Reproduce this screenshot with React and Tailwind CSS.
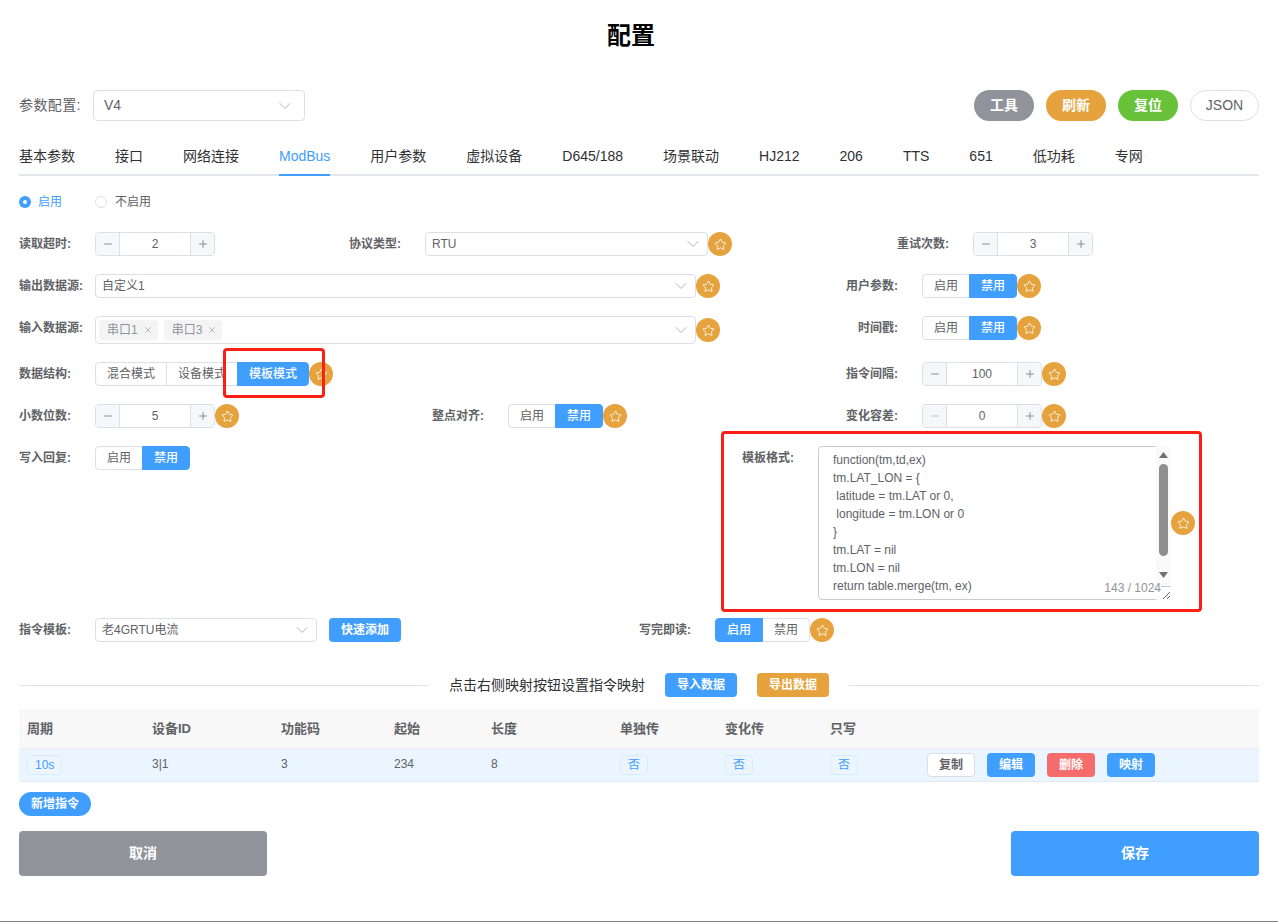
import React from "react";
import { ChevronDown, Minus, Plus, Star, X } from "lucide-react";

const Lab = ({ className = "", children }) => (
  <div className={"h-6 leading-6 text-xs font-bold text-[#606266] shrink-0 whitespace-nowrap " + className}>{children}</div>
);
const Fav = () => (
  <div className="w-6 h-6 rounded-full bg-[#e6a23c] flex items-center justify-center shrink-0">
    <Star size={13} strokeWidth={1.6} color="#fff" />
  </div>
);
const Num = ({ v, off }) => (
  <div className="w-[120px] h-6 border border-[#dcdfe6] rounded flex items-center text-xs text-[#606266] shrink-0 overflow-hidden">
    <div className="w-6 h-full bg-[#f5f7fa] border-r border-[#dcdfe6] flex items-center justify-center">
      <Minus size={12} color={off ? "#c0c4cc" : "#8b8e94"} strokeWidth={2} />
    </div>
    <div className="flex-1 text-center">{v}</div>
    <div className="w-6 h-full bg-[#f5f7fa] border-l border-[#dcdfe6] flex items-center justify-center">
      <Plus size={12} color="#8b8e94" strokeWidth={2} />
    </div>
  </div>
);
const Group = ({ items, active, wide }) => (
  <div className="flex h-6 shrink-0">
    {items.map((t, i) => (
      <div
        key={t}
        className={
          (wide ? "w-[72px] " : "w-[48px] ") +
          (i > 0 ? "-ml-px " : "") +
          (i === 0 ? "rounded-l " : "") +
          (i === items.length - 1 ? "rounded-r " : "") +
          "h-6 leading-[22px] border text-center text-xs " +
          (i === active ? "bg-[#409eff] border-[#409eff] text-white relative font-medium" : "bg-white border-[#dcdfe6] text-[#606266]")
        }
      >
        {t}
      </div>
    ))}
  </div>
);
const Sel = ({ className = "", children }) => (
  <div className={"h-6 border border-[#dcdfe6] rounded flex items-center justify-between pl-1.5 pr-[4px] text-xs text-[#606266] shrink-0 " + className}>
    <span>{children}</span>
    <ChevronDown size={20} strokeWidth={1.1} color="#a8abb2" />
  </div>
);
const Tag = ({ children }) => (
  <span className="inline-block h-5 leading-[18px] px-[7px] bg-[#ecf5ff] border border-[#d9ecff] rounded text-xs text-[#409eff]">{children}</span>
);
const Btn = ({ className = "", children }) => (
  <div className={"h-6 leading-6 text-center text-xs font-bold rounded shrink-0 " + className}>{children}</div>
);
const Chip = ({ children }) => (
  <span className="h-5 pl-2 pr-[5px] bg-[#f4f4f5] rounded flex items-center gap-[5px] text-xs text-[#909399] whitespace-nowrap">
    {children}
    <X size={10} color="#909399" strokeWidth={1.5} />
  </span>
);

const tabs = ["基本参数", "接口", "网络连接", "ModBus", "用户参数", "虚拟设备", "D645/188", "场景联动", "HJ212", "206", "TTS", "651", "低功耗", "专网"];
const heads = ["周期", "设备ID", "功能码", "起始", "长度", "单独传", "变化传", "只写", ""];
const code = ["function(tm,td,ex)", "tm.LAT_LON = {", "\u00a0latitude = tm.LAT or 0,", "\u00a0longitude = tm.LON or 0", "}", "tm.LAT = nil", "tm.LON = nil", "return table.merge(tm, ex)", "\u00a0\u00a0end"];

export default function App() {
  return (
    <div className="relative h-[922px] w-[1278px] bg-white overflow-hidden border-b border-[#808080] [font-family:'Liberation_Sans','Noto_Sans_CJK_SC',sans-serif] text-[#606266]">
      <div className="px-[19px] pt-5">
        <h1 className="h-8 leading-8 pr-4 text-center text-2xl font-bold text-black">配置</h1>

        <div className="mt-[38px] flex items-center h-[31px]">
          <div className="w-[74px] pb-px text-sm tracking-[0.4px] whitespace-nowrap text-[#606266]">参数配置:</div>
          <div className="w-[212px] h-[31px] border border-[#dcdfe6] rounded flex items-center justify-between pl-2.5 pr-[9px] text-sm text-[#606266]">
            <span className="pb-px">V4</span>
            <ChevronDown size={20} strokeWidth={1.1} color="#a8abb2" />
          </div>
          <div className="ml-auto flex gap-3">
            <div className="w-[60px] h-[31px] leading-[31px] text-center rounded-full bg-[#909399] text-white text-sm font-bold">工具</div>
            <div className="w-[60px] h-[31px] leading-[31px] text-center rounded-full bg-[#e6a23c] text-white text-sm font-bold">刷新</div>
            <div className="w-[60px] h-[31px] leading-[31px] text-center rounded-full bg-[#67c23a] text-white text-sm font-bold">复位</div>
            <div className="w-[69px] h-[31px] leading-[29px] text-center rounded-full border border-[#dcdfe6] text-sm">JSON</div>
          </div>
        </div>

        <div className="mt-[15px] h-10 border-b-2 border-[#e4e7ed] flex gap-10">
          {tabs.map((t) => (
            <div key={t} className={"h-10 leading-10 border-b-2 text-sm " + (t === "ModBus" ? "border-[#409eff] text-[#409eff]" : "border-transparent text-[#303133]")}>
              {t}
            </div>
          ))}
        </div>

        <div className="mt-[19px] flex items-center h-3.5 text-xs">
          <span className="w-3 h-3 rounded-full bg-[#409eff] flex items-center justify-center">
            <span className="w-1 h-1 rounded-full bg-white" />
          </span>
          <span className="ml-[7px] text-[#409eff]">启用</span>
          <span className="ml-[33px] w-3 h-3 rounded-full border border-[#dcdfe6]" />
          <span className="ml-2">不启用</span>
        </div>

        <div className="mt-[23px] flex items-center h-6">
          <Lab className="w-[76px]">读取超时:</Lab>
          <Num v="2" />
          <Lab className="w-[210px] text-right pr-6">协议类型:</Lab>
          <Sel className="w-[283px]">RTU</Sel>
          <Fav />
          <Lab className="w-[241px] text-right pr-6">重试次数:</Lab>
          <Num v="3" />
        </div>

        <div className="mt-[18px] flex items-center h-6">
          <Lab className="w-[76px]">输出数据源:</Lab>
          <Sel className="w-[601px]">自定义1</Sel>
          <Fav />
          <Lab className="w-[202px] text-right pr-6">用户参数:</Lab>
          <Group items={["启用", "禁用"]} active={1} />
          <Fav />
        </div>

        <div className="mt-[18px] flex items-start h-7">
          <Lab className="w-[76px]">输入数据源:</Lab>
          <div className="w-[601px] h-7 border border-[#dcdfe6] rounded flex items-center justify-between pl-[3px] pr-[4px] shrink-0">
            <div className="flex gap-[6px]">
              <Chip>串口1</Chip>
              <Chip>串口3</Chip>
            </div>
            <ChevronDown size={20} strokeWidth={1.1} color="#a8abb2" />
          </div>
          <div className="self-center"><Fav /></div>
          <Lab className="w-[202px] text-right pr-6">时间戳:</Lab>
          <Group items={["启用", "禁用"]} active={1} />
          <Fav />
        </div>

        <div className="mt-[18px] flex items-center h-6">
          <Lab className="w-[76px]">数据结构:</Lab>
          <Group items={["混合模式", "设备模式", "模板模式"]} active={2} wide />
          <Fav />
          <Lab className="w-[589px] text-right pr-6">指令间隔:</Lab>
          <Num v="100" />
          <Fav />
        </div>

        <div className="mt-[18px] flex items-center h-6">
          <Lab className="w-[76px]">小数位数:</Lab>
          <Num v="5" />
          <Fav />
          <Lab className="w-[269px] text-right pr-6">整点对齐:</Lab>
          <Group items={["启用", "禁用"]} active={1} />
          <Fav />
          <Lab className="w-[295px] text-right pr-6">变化容差:</Lab>
          <Num v="0" off />
          <Fav />
        </div>

        <div className="mt-[18px] flex items-start h-[154px]">
          <Lab className="w-[76px]">写入回复:</Lab>
          <Group items={["启用", "禁用"]} active={1} />
          <Lab className="w-[628px] text-right pr-6">模板格式:</Lab>
          <div className="relative w-[353px] h-[154px] shrink-0">
            <div className="h-full border border-[#c8cad0] rounded overflow-hidden pl-[14px] pt-1 text-xs leading-[18px] text-[#606266]">
              {code.map((l, i) => (
                <div key={i} className="whitespace-pre">{l}</div>
              ))}
            </div>
            <div className="absolute right-0 top-0 bottom-0 w-[15px] bg-[#fafafa] flex flex-col items-center">
              <svg width="9" height="6" viewBox="0 0 9 6" className="mt-[6px]"><path d="M4.5 0L9 6H0z" fill="#707070" /></svg>
              <div className="mt-[6px] w-[9px] h-[92px] rounded-full bg-[#8f8f8f]" />
              <svg width="9" height="6" viewBox="0 0 9 6" className="mt-4"><path d="M4.5 6L9 0H0z" fill="#707070" /></svg>
            </div>
            <div className="absolute right-0 bottom-0 w-[10px] h-[14px] bg-white border-t border-[#c8cad0]">
              <svg width="9" height="9" viewBox="0 0 9 9" className="absolute right-0 bottom-0"><path d="M1 8L8 1M5 8L8 5" stroke="#666" strokeWidth="1" /></svg>
            </div>
            <div className="absolute right-[10px] bottom-1 h-4 leading-4 bg-white text-xs text-[#909399]">143 / 1024</div>
          </div>
          <div className="self-center"><Fav /></div>
        </div>

        <div className="mt-[18px] flex items-center h-6">
          <Lab className="w-[76px]">指令模板:</Lab>
          <Sel className="w-[222px]">老4GRTU电流</Sel>
          <Btn className="ml-3 w-[72px] bg-[#409eff] text-white">快速添加</Btn>
          <Lab className="w-[314px] text-right pr-6">写完即读:</Lab>
          <Group items={["启用", "禁用"]} active={0} />
          <Fav />
        </div>

        <div className="mt-[31px] flex items-center gap-5 h-6">
          <div className="flex-1 h-px bg-[#dcdfe6]" />
          <span className="text-sm leading-6 text-[#303133]">点击右侧映射按钮设置指令映射</span>
          <Btn className="w-[72px] bg-[#409eff] text-white">导入数据</Btn>
          <Btn className="w-[72px] bg-[#e6a23c] text-white">导出数据</Btn>
          <div className="flex-1 h-px bg-[#dcdfe6]" />
        </div>

        <table className="mt-3 w-full table-fixed border-collapse">
          <colgroup>
            <col className="w-[125px]" />
            <col className="w-[129px]" />
            <col className="w-[113px]" />
            <col className="w-[97px]" />
            <col className="w-[129px]" />
            <col className="w-[105px]" />
            <col className="w-[105px]" />
            <col className="w-[97px]" />
            <col />
          </colgroup>
          <thead>
            <tr className="h-[39px] bg-[#f8f8f8] border-b border-[#ebeef5]">
              {heads.map((h, i) => (
                <th key={i} className="px-2 text-left text-[13px] font-bold text-[#606266]">{h}</th>
              ))}
            </tr>
          </thead>
          <tbody>
            <tr className="h-[33px] bg-[#ebf5ff] border-b border-[#e4eaf1] text-xs text-[#606266]">
              <td className="px-2"><Tag>10s</Tag></td>
              <td className="px-2 pb-0.5">3|1</td>
              <td className="px-2 pb-0.5">3</td>
              <td className="px-2 pb-0.5">234</td>
              <td className="px-2 pb-0.5">8</td>
              <td className="px-2"><Tag>否</Tag></td>
              <td className="px-2"><Tag>否</Tag></td>
              <td className="px-2"><Tag>否</Tag></td>
              <td className="px-2">
                <div className="flex gap-3">
                  <Btn className="w-12 leading-[22px] bg-white border border-[#dcdfe6] text-[#606266]">复制</Btn>
                  <Btn className="w-12 bg-[#409eff] text-white">编辑</Btn>
                  <Btn className="w-12 bg-[#f56c6c] text-white">删除</Btn>
                  <Btn className="w-12 bg-[#409eff] text-white">映射</Btn>
                </div>
              </td>
            </tr>
          </tbody>
        </table>

        <Btn className="mt-[10px] w-[72px] !rounded-full bg-[#409eff] text-white">新增指令</Btn>

        <div className="mt-[15px] flex justify-between">
          <div className="w-[248px] h-[45px] leading-[45px] text-center rounded bg-[#909399] text-white text-sm font-bold">取消</div>
          <div className="w-[248px] h-[45px] leading-[45px] text-center rounded bg-[#409eff] text-white text-sm font-bold">保存</div>
        </div>
      </div>

      <div className="absolute left-[223px] top-[348px] w-[102px] h-[50px] border-[3px] border-[#fb1f14] rounded-sm" />
      <div className="absolute left-[721px] top-[431px] w-[481px] h-[181px] border-[3px] border-[#fb1f14] rounded-sm" />
    </div>
  );
}
